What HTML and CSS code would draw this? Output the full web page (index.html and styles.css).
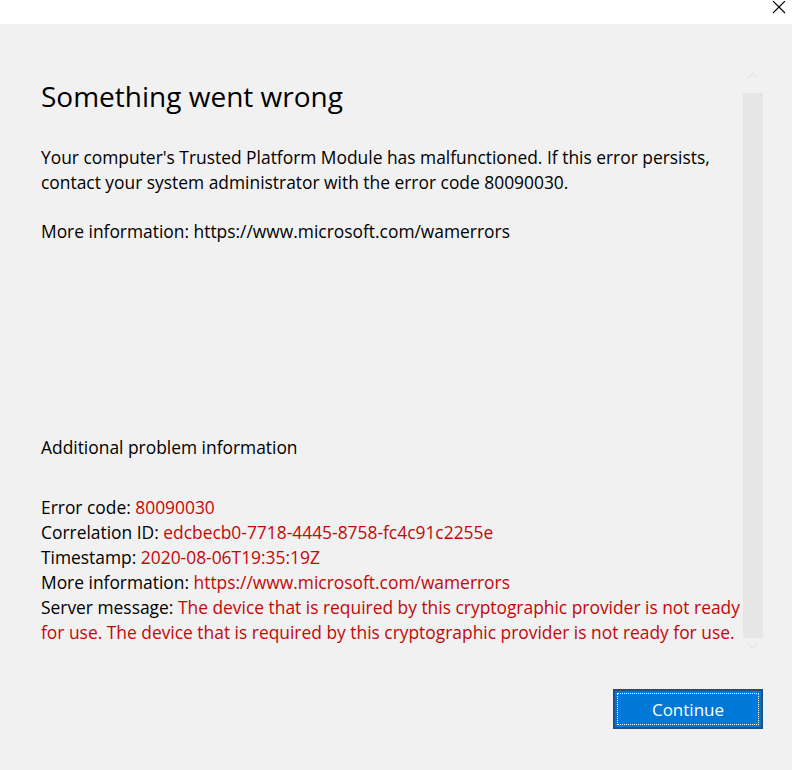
FILE: index.html
```html
<!DOCTYPE html>
<html lang="en">
<head>
    <meta charset="UTF-8">
    <meta name="viewport" content="width=device-width, initial-scale=1.0">
    <title>Something went wrong</title>
    <link rel="stylesheet" href="styles.css">
</head>
<body>
    <div class="titlebar">
        <span class="close-btn">
            <svg width="14" height="14" viewBox="0 0 14 14"><path d="M1 0 L13 12 M13 0 L1 12" stroke="#000" stroke-width="1.1" fill="none"/></svg>
        </span>
    </div>
    <div class="dialog">
        <div class="content">
            <h1 class="heading">Something went wrong</h1>
            <p class="message">Your computer's Trusted Platform Module has malfunctioned. If this error persists,<br>contact your system administrator with the error code 80090030.</p>
            <p class="message">More information: https://www.microsoft.com/wamerrors</p>

            <p class="extra-title">Additional problem information</p>
            <div class="details">
                <div>Error code: <span class="err">80090030</span></div>
                <div>Correlation ID: <span class="err">edcbecb0-7718-4445-8758-fc4c91c2255e</span></div>
                <div>Timestamp: <span class="err">2020-08-06T19:35:19Z</span></div>
                <div>More information: <span class="err">https://www.microsoft.com/wamerrors</span></div>
                <div>Server message: <span class="err">The device that is required by this cryptographic provider is not ready<br>for use. The device that is required by this cryptographic provider is not ready for use.</span></div>
            </div>
        </div>

        <div class="scrollbar">
            <div class="arrow up"></div>
            <div class="thumb"></div>
            <div class="arrow down"></div>
        </div>

        <div class="footer">
            <button class="continue-btn"><span class="focus-ring">Continue</span></button>
        </div>
    </div>
</body>
</html>
```

FILE: styles.css
```css
body {
    margin: 0;
    font-family: "Open Sans", "Noto Sans", sans-serif;
    background: #f1f1f1;
    color: #000;
}

.titlebar {
    height: 24px;
    background: #fff;
    position: relative;
}

.close-btn {
    position: absolute;
    right: 6px;
    top: -2px;
}

.dialog {
    position: relative;
    height: 746px;
}

.content {
    padding: 53px 0 0 41px;
    white-space: nowrap;
}

.heading {
    margin: 0;
    font-size: 28px;
    font-weight: 400;
    line-height: 38px;
}

.message {
    margin: 30px 0 0 0;
    font-size: 17.4px;
    line-height: 25px;
}

.message + .message {
    margin-top: 24px;
}

.extra-title {
    margin: 191px 0 0 0;
    font-size: 17.4px;
    line-height: 25px;
}

.details {
    margin-top: 35px;
    font-size: 17.4px;
    line-height: 25px;
}

.err {
    color: #c40808;
}

/* scrollbar drawn over the content area */
.scrollbar {
    position: absolute;
    top: 36px;
    left: 743px;
    width: 20px;
    display: flex;
    flex-direction: column;
    align-items: center;
}

.arrow {
    width: 20px;
    height: 33px;
    position: relative;
}

.arrow::before {
    content: "";
    position: absolute;
    left: 6px;
    width: 6px;
    height: 6px;
    border-left: 1px solid #e2e2e2;
    border-top: 1px solid #e2e2e2;
}

.arrow.up::before {
    top: 14px;
    transform: rotate(45deg);
}

.arrow.down {
    height: 20px;
}

.arrow.down::before {
    top: 2px;
    transform: rotate(225deg);
}

.thumb {
    width: 20px;
    height: 545px;
    background: #e6e6e6;
}

.footer {
    position: absolute;
    left: 613px;
    top: 665px;
}

.continue-btn {
    width: 150px;
    height: 40px;
    padding: 2px;
    border: 2px solid #1c4f86;
    background: #0078d7;
    color: #fff;
    font-family: inherit;
    font-size: 17px;
    cursor: pointer;
    display: flex;
}

.focus-ring {
    flex: 1;
    border: 1px dotted #fff;
    display: flex;
    align-items: center;
    justify-content: center;
}
```
